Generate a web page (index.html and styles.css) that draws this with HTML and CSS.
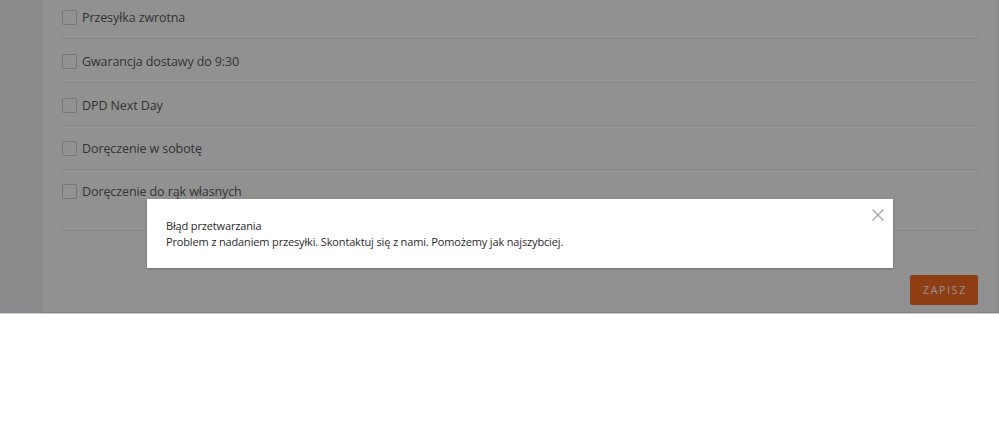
FILE: index.html
```html
<!DOCTYPE html>
<html lang="pl">

<head>
    <meta charset="UTF-8">
    <meta name="viewport" content="width=device-width, initial-scale=1.0">
    <title>Ustawienia przesyłki</title>
    <link rel="stylesheet" href="styles.css">
</head>

<body>

    <div class="page">
        <div class="sidebar"></div>

        <div class="main">
            <div class="options">
                <label class="option">
                    <span class="check"></span>
                    <span class="label">Przesyłka zwrotna</span>
                </label>
                <label class="option">
                    <span class="check"></span>
                    <span class="label">Gwarancja dostawy do 9:30</span>
                </label>
                <label class="option">
                    <span class="check"></span>
                    <span class="label">DPD Next Day</span>
                </label>
                <label class="option">
                    <span class="check"></span>
                    <span class="label">Doręczenie w sobotę</span>
                </label>
                <label class="option last">
                    <span class="check"></span>
                    <span class="label">Doręczenie do rąk własnych</span>
                </label>
            </div>

            <div class="actions">
                <button class="save">Zapisz</button>
            </div>
        </div>

        <div class="edge"></div>

        <div class="overlay"></div>

        <div class="modal">
            <button class="close" aria-label="Zamknij">
                <svg width="12" height="12" viewBox="0 0 12 12">
                    <path d="M0.5 0.5 L11.5 11.5 M11.5 0.5 L0.5 11.5" stroke="#a3a3a3" stroke-width="1.3" fill="none" />
                </svg>
            </button>
            <p class="title">Błąd przetwarzania</p>
            <p class="message">Problem z nadaniem przesyłki. Skontaktuj się z nami. Pomożemy jak najszybciej.</p>
        </div>
    </div>

    <div class="bottom-line"></div>

</body>

</html>
```

FILE: styles.css
```css
html {
    font-family: "Open Sans", "Liberation Sans", sans-serif;
}

body {
    margin: 0;
    background: #fff;
}

.page {
    position: relative;
    display: flex;
    height: 313px;
    overflow: hidden;
}

.sidebar {
    width: 43px;
    background-color: #f2f3f6;
}

.main {
    flex: 1;
    background-color: #fff;
    padding: 0 18px 0 19px;
    border-bottom: 1px solid #e4e4e4;
}

.edge {
    width: 3px;
    background-color: #f2f3f6;
}

.options {
    margin-top: -5px;
}

.option {
    display: flex;
    align-items: flex-start;
    height: 43.75px;
    padding-top: 15px;
    box-sizing: border-box;
    border-bottom: 1px solid #ececec;
    color: #5c5c5c;
    font-size: 12.5px;
    letter-spacing: -0.1px;
}

.option.last {
    height: 61px;
    padding-top: 14px;
}

.check {
    width: 13px;
    height: 13px;
    border: 1px solid #cfcfcf;
    border-radius: 2px;
    background: #fff;
    flex-shrink: 0;
}

.label {
    margin-left: 5px;
    line-height: 16px;
}

.actions {
    display: flex;
    justify-content: flex-end;
    margin-top: 44px;
}

.save {
    font-family: "Open Sans", "Liberation Sans", sans-serif;
    background-color: #fb6c21;
    color: #fff;
    border: 0;
    border-radius: 2px;
    width: 68px;
    height: 30px;
    font-size: 10.5px;
    letter-spacing: 1.7px;
    text-transform: uppercase;
    padding: 0 0 0 2px;
}

.overlay {
    position: absolute;
    inset: 0;
    background-color: rgba(0, 0, 0, 0.43);
}

.modal {
    position: absolute;
    top: 199px;
    left: 147px;
    width: 746px;
    height: 69px;
    box-sizing: border-box;
    padding: 19px 19px 0 19px;
    background-color: #fff;
    box-shadow: 0 1px 2px rgba(0, 0, 0, 0.25);
    color: #2a2a2a;
    font-size: 11px;
    letter-spacing: -0.15px;
    line-height: 16px;
}

.modal p {
    margin: 0;
}

.close {
    position: absolute;
    top: 10px;
    right: 9px;
    padding: 0;
    border: 0;
    background: none;
    width: 12px;
    height: 12px;
    line-height: 0;
}

.bottom-line {
    height: 1px;
    background-color: #cbcbcb;
}
```
